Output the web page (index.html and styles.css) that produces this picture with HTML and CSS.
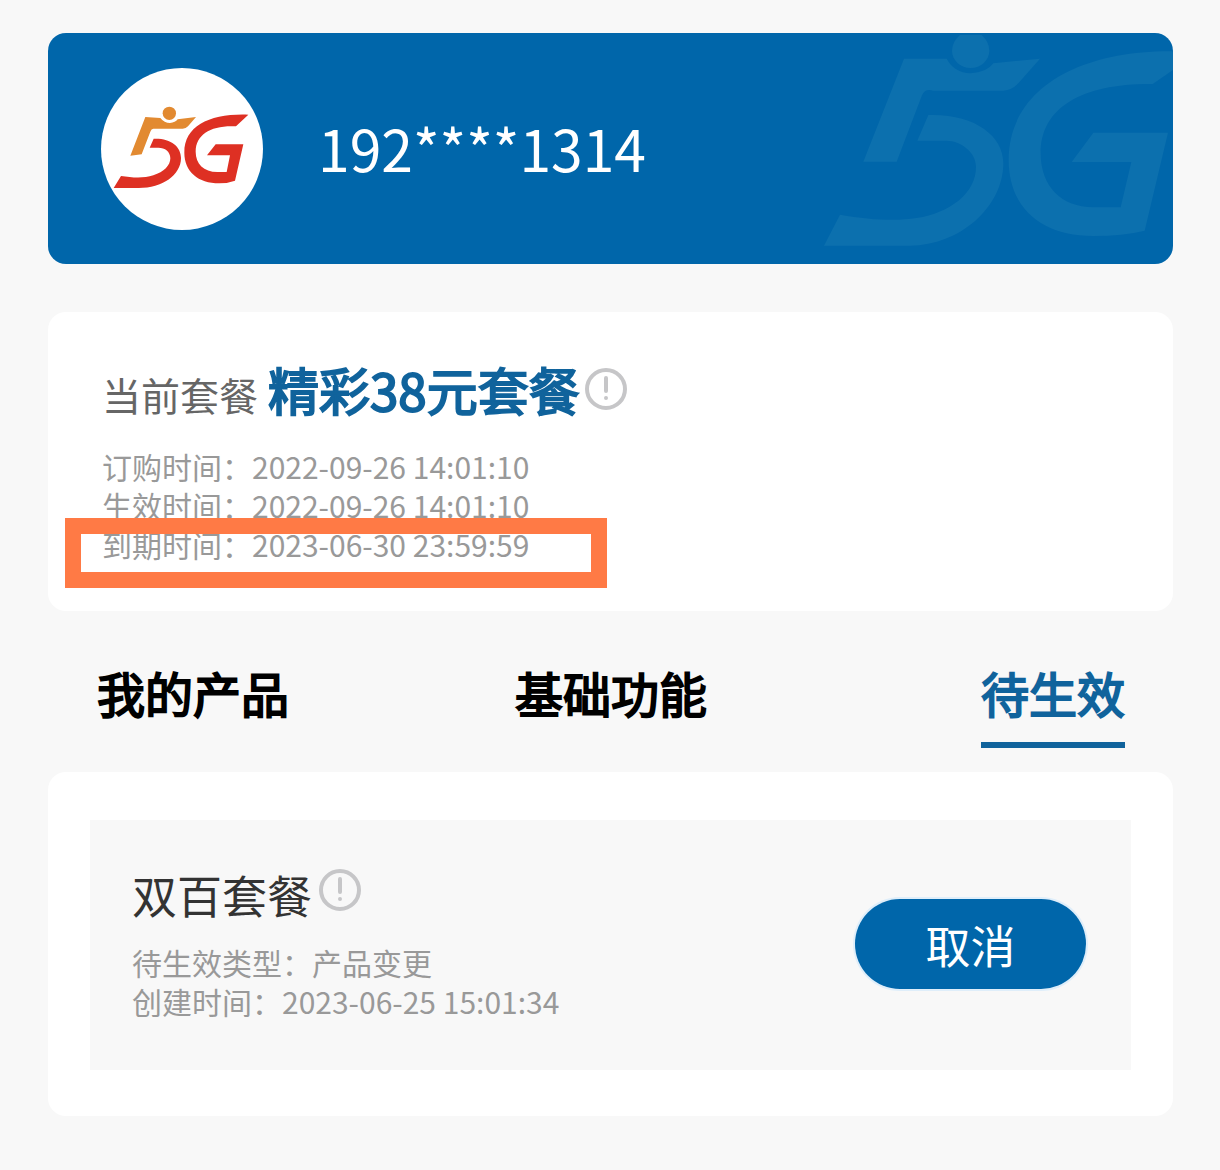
FILE: index.html
```html
<!DOCTYPE html>
<html lang="zh-CN">
<head>
<meta charset="utf-8">
<meta name="viewport" content="width=device-width, initial-scale=1">
<title>我的套餐</title>
<link rel="stylesheet" href="styles.css">
</head>
<body>
<main class="page">
  <header class="account">
    <svg class="account-watermark" viewBox="69 39 1050 693" aria-hidden="true">
      <path d="M480 45H545Q568 66 568 92A56 52 0 0 1 456 92Q456 66 480 45Z"/>
      <path d="M312 116H440Q462 158 512 160Q560 158 580 130L720 116L655 190Q635 210 610 212H400Q375 204 366 226L290 425H190Z"/>
      <path d="M385 285C520 280 610 345 610 430C610 560 480 677 330 677H72L120 584C210 600 290 604 350 594C450 578 528 520 528 440C528 395 480 362 440 362H352Z"/>
      <path d="M1119 94C850 90 626 200 626 420C626 560 720 648 880 648Q970 648 1034 632L1104 338H880L815 426H994L962 562H880C785 562 722 500 722 400C722 260 850 190 1058 192L1119 150Z"/>
    </svg>
    <span class="avatar">
      <svg viewBox="33 24 486 486" role="img" aria-label="5G">
        <circle class="logo-gold" cx="238" cy="160" r="20"/>
        <path class="logo-gold" d="M166 171L211 174Q223 189 240 189Q256 188 263 178L318 171L294 199Q288 206 278 206H190Q184 206 181 215L155 283L121 287Z"/>
        <path class="logo-red" d="M191 236C242 234 273 259 273 294C273 345 217 384 146 384H71L93 348C126 353 160 356 190 346C222 336 241 316 241 295C241 275 225 263 205 263H179Z"/>
        <path class="logo-red" d="M475 164C363 160 283 195 283 278C283 334 324 370 388 370Q414 370 435 362L460 253H377L351 286H420L410 336H382C341 336 317 311 317 275C317 222 365 195 438 199Z"/>
      </svg>
    </span>
    <span class="phone">192****1314</span>
  </header>

  <section class="card plan">
    <div class="plan-head">
      <span class="plan-label">当前套餐</span>
      <h1 class="plan-name">精彩38元套餐</h1>
      <button class="info" type="button" aria-label="套餐说明">
        <svg viewBox="0 0 42 42" aria-hidden="true"><circle cx="21" cy="21" r="19"/><path d="M21 10V23M21 30V30.1"/></svg>
      </button>
    </div>
    <dl class="details">
      <div class="detail"><dt>订购时间：</dt><dd>2022-09-26 14:01:10</dd></div>
      <div class="detail"><dt>生效时间：</dt><dd>2022-09-26 14:01:10</dd></div>
      <div class="detail detail-marked"><dt>到期时间：</dt><dd>2023-06-30 23:59:59</dd></div>
    </dl>
  </section>

  <nav class="tabs">
    <button class="tab" type="button">我的产品</button>
    <button class="tab" type="button">基础功能</button>
    <button class="tab tab-active" type="button" aria-current="true">待生效</button>
  </nav>

  <section class="card pending">
    <article class="item">
      <div class="item-body">
        <div class="item-head">
          <h2 class="item-name">双百套餐</h2>
          <button class="info" type="button" aria-label="套餐说明">
            <svg viewBox="0 0 42 42" aria-hidden="true"><circle cx="21" cy="21" r="19"/><path d="M21 10V23M21 30V30.1"/></svg>
          </button>
        </div>
        <dl class="details">
          <div class="detail"><dt>待生效类型：</dt><dd>产品变更</dd></div>
          <div class="detail"><dt>创建时间：</dt><dd>2023-06-25 15:01:34</dd></div>
        </dl>
      </div>
      <button class="cancel" type="button">取消</button>
    </article>
  </section>
</main>
</body>
</html>
```

FILE: styles.css
```css
*,
*::after {
  box-sizing: border-box;
}

body {
  margin: 0;
  background: #f8f8f8;
  font-family: "Noto Sans CJK SC", sans-serif;
  color: #000;
}

button {
  padding: 0;
  border: 0;
  background: none;
  color: inherit;
  font: inherit;
  cursor: pointer;
}

h1,
h2,
dl,
dd {
  margin: 0;
}

.page {
  padding: 33px 47px 54px 48px;
}

.account {
  position: relative;
  display: flex;
  align-items: center;
  gap: 55px;
  padding: 35px 53px 34px;
  overflow: hidden;
  border-radius: 18px;
  background: #0066aa;
  color: #fff;
}

.account-watermark {
  position: absolute;
  top: 0;
  right: 0;
  height: 100%;
  fill: #0c70ae;
}

.avatar {
  width: 162px;
  height: 162px;
  border-radius: 50%;
  background: #fff;
}

.avatar svg {
  display: block;
}

.logo-gold {
  fill: #e28a31;
}

.logo-red {
  fill: #de3023;
}

.phone {
  padding-bottom: 4px;
  font-size: 57px;
  line-height: 80px;
}

.card {
  border-radius: 18px;
  background: #fff;
}

.plan {
  margin-top: 48px;
  padding: 39px 54px 47px;
}

.plan-head {
  display: flex;
  align-items: baseline;
  height: 96px;
}

.plan-label {
  margin-right: 10px;
  color: #666;
  font-size: 39px;
  line-height: 76px;
}

.plan-name {
  color: #10639c;
  font-size: 51px;
  font-weight: 400;
  line-height: 76px;
  -webkit-text-stroke: 2px #10639c;
}

.info {
  align-self: flex-start;
  width: 42px;
  height: 42px;
  margin: 17px 0 0 5px;
}

.info svg {
  display: block;
  fill: none;
  stroke: #c6c6c8;
  stroke-width: 4;
  stroke-linecap: round;
}

.details {
  color: #999;
  font-size: 30px;
  line-height: 39px;
}

.detail {
  position: relative;
  display: flex;
}

.detail-marked::after {
  content: "";
  position: absolute;
  top: -7px;
  left: -37px;
  width: 542px;
  height: 70px;
  border: 16px solid #ff7a45;
}

.tabs {
  display: grid;
  grid-template-columns: 1fr auto 1fr;
  padding: 48px 48px 24px 49px;
}

.tab {
  justify-self: start;
  height: 89px;
  padding-bottom: 16px;
  border-bottom: 6px solid transparent;
  font-size: 48px;
  line-height: 67px;
  -webkit-text-stroke: 2px currentColor;
}

.tab-active {
  justify-self: end;
  border-color: #10639c;
  color: #10639c;
}

.pending {
  padding: 48px 42px 46px;
}

.item {
  display: flex;
  align-items: center;
  justify-content: space-between;
  padding: 42px 45px 44px 42px;
  background: #f8f8f8;
}

.item-body {
  padding-bottom: 5px;
}

.item-head {
  display: flex;
  height: 81px;
}

.item-name {
  font-size: 45px;
  font-weight: 400;
  line-height: 66px;
  color: #333;
}

.item .info {
  margin: 7px 0 0 7px;
}

.cancel {
  width: 231px;
  height: 90px;
  border-radius: 45px;
  background: #0066aa;
  box-shadow: 0 0 0 2px #dfeefa;
  color: #fff;
  font-size: 45px;
}
```
